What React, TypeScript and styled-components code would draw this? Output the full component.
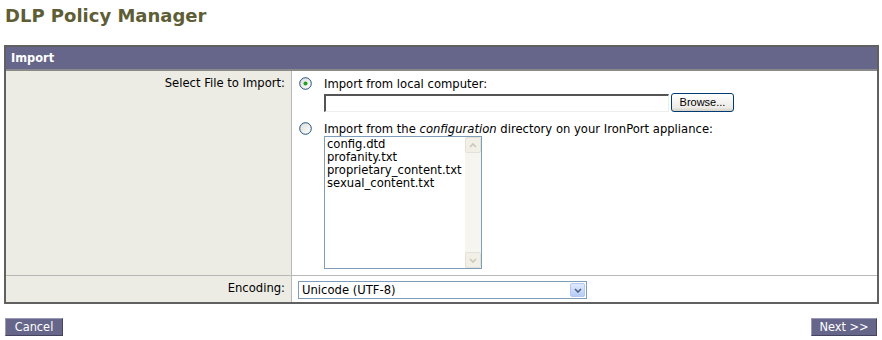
import React from "react";
import styled, { createGlobalStyle } from "styled-components";

const GlobalStyle = createGlobalStyle`
  body {
    margin: 0;
    background: #ffffff;
    font-family: Verdana, "DejaVu Sans", sans-serif;
    font-size: 11.6px;
    color: #000;
  }
`;

const Page = styled.div`
  padding: 0 3px 0 4px;
`;

const Title = styled.h1`
  margin: 0;
  padding: 5px 0 0 1px;
  height: 45px;
  box-sizing: border-box;
  font-size: 18px;
  line-height: 22px;
  font-weight: bold;
  color: #5e5d36;
`;

const Panel = styled.div`
  border: 2px solid #606060;
`;

const PanelHeader = styled.div`
  height: 22px;
  line-height: 22px;
  background: #66668a;
  color: #fff;
  font-weight: bold;
  font-size: 11.4px;
  padding-left: 5px;
  border-bottom: 2px solid #8a8a8a;
`;

const Row = styled.div<{ $height: number; $last?: boolean }>`
  display: grid;
  grid-template-columns: 286px 1fr;
  height: ${(p) => p.$height}px;
  border-bottom: ${(p) => (p.$last ? "none" : "1px solid #b8b8b8")};
`;

const LabelCell = styled.div`
  background: #ecece4;
  text-align: right;
  padding: 5px 6px 0 0;
  border-right: 1px solid #b8b8b8;
`;

const ValueCell = styled.div<{ $pad?: string }>`
  padding: ${(p) => p.$pad ?? "6px 0 0 7px"};
`;

const Option = styled.div<{ $gap?: number }>`
  display: grid;
  grid-template-columns: 25px 1fr;
  align-items: start;
  margin-top: ${(p) => p.$gap ?? 0}px;
`;

const OptionBody = styled.div<{ $gap: number }>`
  display: flex;
  flex-direction: column;
  gap: ${(p) => p.$gap}px;
`;

const OptionText = styled.div`
  line-height: 13px;
  padding-top: 1px;
`;

const FileRow = styled.div`
  display: flex;
  gap: 2px;
  align-items: center;
`;

const TextBox = styled.div`
  width: 345px;
  height: 18px;
  box-sizing: border-box;
  background: #fff;
  border-top: 2px solid #555;
  border-left: 2px solid #555;
  border-right: 1px solid #eee;
  border-bottom: 1px solid #eee;
`;

const BrowseButton = styled.div`
  width: 63px;
  height: 19px;
  box-sizing: border-box;
  border: 1px solid #003c74;
  border-radius: 3px;
  background: linear-gradient(#ffffff, #ecebe6 80%, #d6d0c5);
  font-family: Tahoma, "Liberation Sans", sans-serif;
  font-size: 11px;
  text-align: center;
  line-height: 17px;
`;

const ListBox = styled.div`
  display: flex;
  width: 158px;
  height: 133px;
  box-sizing: border-box;
  border: 1px solid #7f9db9;
`;

const ListItems = styled.div`
  flex: 1;
  padding: 1px 0 0 2px;
  line-height: 13px;
`;

const ScrollTrack = styled.div`
  width: 16px;
  background: #f6f5ef;
  display: flex;
  flex-direction: column;
  justify-content: space-between;
`;

const ScrollButton = styled.div`
  width: 16px;
  height: 16px;
  box-sizing: border-box;
  border: 1px solid #e4e2d8;
  border-radius: 2px;
  background: #f1efe6;
  display: flex;
  align-items: center;
  justify-content: center;
`;

const SelectBox = styled.div`
  width: 289px;
  height: 18px;
  box-sizing: border-box;
  border: 1px solid #7f9db9;
  display: flex;
  align-items: center;
  justify-content: space-between;
  padding: 0 1px 0 3px;
`;

const SelectArrow = styled.div`
  width: 15px;
  height: 14px;
  box-sizing: border-box;
  border: 1px solid #b3c8f0;
  border-radius: 2px;
  background: linear-gradient(#e1eafe, #b5ccf7);
  display: flex;
  align-items: center;
  justify-content: center;
`;

const ButtonRow = styled.div`
  display: flex;
  justify-content: space-between;
  padding: 14px 2px 0 1px;
`;

const NavButton = styled.div<{ $width: number }>`
  width: ${(p) => p.$width}px;
  height: 18px;
  box-sizing: border-box;
  background: #66668a;
  border-top: 1px solid #9a9ab8;
  border-left: 1px solid #9a9ab8;
  border-right: 1px solid #44445e;
  border-bottom: 1px solid #44445e;
  color: #fff;
  text-align: center;
  line-height: 16px;
  font-size: 11.4px;
`;

const Radio = ({ checked }: { checked?: boolean }) => (
  <svg width="13" height="13" viewBox="0 0 13 13">
    <defs>
      <linearGradient id={checked ? "rg1" : "rg2"} x1="0" y1="0" x2="1" y2="1">
        <stop offset="0" stopColor="#dcdcd6" />
        <stop offset="1" stopColor="#ffffff" />
      </linearGradient>
    </defs>
    <circle cx="6.5" cy="6.5" r="5.8" fill={`url(#${checked ? "rg1" : "rg2"})`} stroke="#1c5180" strokeWidth="1" />
    {checked && <circle cx="6.5" cy="6.5" r="2" fill="#21a121" />}
  </svg>
);

const Chevron = ({ up, color }: { up?: boolean; color: string }) => (
  <svg width="8" height="5" viewBox="0 0 8 5">
    <path d={up ? "M1 4 L4 1 L7 4" : "M1 1 L4 4 L7 1"} fill="none" stroke={color} strokeWidth="1.6" />
  </svg>
);

const files = ["config.dtd", "profanity.txt", "proprietary_content.txt", "sexual_content.txt"];

export default function App() {
  return (
    <Page>
      <GlobalStyle />
      <Title>DLP Policy Manager</Title>
      <Panel>
        <PanelHeader>Import</PanelHeader>
        <Row $height={204}>
          <LabelCell>Select File to Import:</LabelCell>
          <ValueCell>
            <Option>
              <Radio checked />
              <OptionBody $gap={2}>
                <OptionText>Import from local computer:</OptionText>
                <FileRow>
                  <TextBox />
                  <BrowseButton>Browse...</BrowseButton>
                </FileRow>
              </OptionBody>
            </Option>
            <Option $gap={10}>
              <Radio />
              <OptionBody $gap={0}>
                <OptionText>
                  Import from the <i>configuration</i> directory on your IronPort appliance:
                </OptionText>
                <ListBox>
                  <ListItems>
                    {files.map((f) => (
                      <div key={f}>{f}</div>
                    ))}
                  </ListItems>
                  <ScrollTrack>
                    <ScrollButton>
                      <Chevron up color="#c9c7ba" />
                    </ScrollButton>
                    <ScrollButton>
                      <Chevron color="#c9c7ba" />
                    </ScrollButton>
                  </ScrollTrack>
                </ListBox>
              </OptionBody>
            </Option>
          </ValueCell>
        </Row>
        <Row $height={26} $last>
          <LabelCell>Encoding:</LabelCell>
          <ValueCell $pad="5px 0 0 6px">
            <SelectBox>
              <span>Unicode (UTF-8)</span>
              <SelectArrow>
                <Chevron color="#4d6185" />
              </SelectArrow>
            </SelectBox>
          </ValueCell>
        </Row>
      </Panel>
      <ButtonRow>
        <NavButton $width={58}>Cancel</NavButton>
        <NavButton $width={66}>Next &gt;&gt;</NavButton>
      </ButtonRow>
    </Page>
  );
}
